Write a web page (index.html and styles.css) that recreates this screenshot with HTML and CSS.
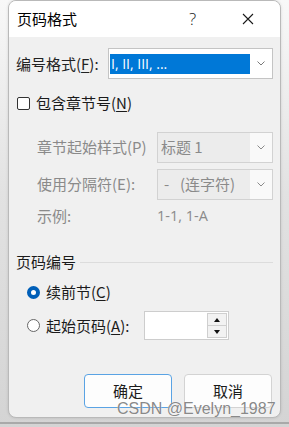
FILE: index.html
```html
<!DOCTYPE html>
<html lang="zh-CN">
<head>
    <meta charset="UTF-8">
    <meta name="viewport" content="width=device-width, initial-scale=1.0">
    <title>页码格式</title>
    <link rel="stylesheet" href="styles.css">
</head>
<body>
    <div class="dialog">
        <!-- 标题栏 -->
        <div class="titlebar">
            <span class="title">页码格式</span>
            <span class="help">?</span>
            <span class="close">
                <svg width="12" height="12" viewBox="0 0 12 12">
                    <path d="M1 1L11 11M11 1L1 11" stroke="#1a1a1a" stroke-width="1.1" fill="none"/>
                </svg>
            </span>
        </div>

        <div class="content">
            <div class="row row-format">
                <span class="label">编号格式(<u>F</u>):</span>
                <div class="select">
                    <span class="select-text"><span class="hl">I, II, III, ...</span></span>
                    <span class="arrow">
                        <svg width="8" height="5" viewBox="0 0 8 5"><path d="M0.5 0.5L4 4L7.5 0.5" stroke="#7a7a7a" fill="none"/></svg>
                    </span>
                </div>
            </div>

            <div class="row row-check">
                <span class="checkbox"></span>
                <span class="check-label">包含章节号(<u>N</u>)</span>
            </div>

            <!-- 章节号设置，禁用状态 -->
            <div class="chapter">
                <div class="row row-sub">
                    <span class="sub-label">章节起始样式(P)</span>
                    <div class="select disabled">
                        <span class="select-text">标题 1</span>
                        <span class="arrow">
                            <svg width="8" height="5" viewBox="0 0 8 5"><path d="M0.5 0.5L4 4L7.5 0.5" stroke="#8a8a8a" fill="none"/></svg>
                        </span>
                    </div>
                </div>
                <div class="row row-sub row-sep">
                    <span class="sub-label">使用分隔符(E):</span>
                    <div class="select disabled">
                        <span class="select-text"><span class="dash">-</span>(连字符)</span>
                        <span class="arrow">
                            <svg width="8" height="5" viewBox="0 0 8 5"><path d="M0.5 0.5L4 4L7.5 0.5" stroke="#8a8a8a" fill="none"/></svg>
                        </span>
                    </div>
                </div>
                <div class="row row-example">
                    <span class="sub-label">示例:</span>
                    <span class="example">1-1, 1-A</span>
                </div>
            </div>

            <div class="group-head">
                <span>页码编号</span>
                <span class="group-line"></span>
            </div>

            <div class="row row-radio">
                <span class="radio checked"></span>
                <span class="radio-label">续前节(<u>C</u>)</span>
            </div>
            <div class="row row-radio row-start">
                <span class="radio"></span>
                <span class="radio-label start-label">起始页码(<u>A</u>):</span>
                <div class="spin">
                    <span class="spin-input"></span>
                    <span class="spin-btns">
                        <span class="spin-btn"><i class="tri up"></i></span>
                        <span class="spin-btn"><i class="tri down"></i></span>
                    </span>
                </div>
            </div>

            <div class="buttons">
                <span class="btn btn-ok">确定</span>
                <span class="btn">取消</span>
            </div>
        </div>

        <span class="watermark">CSDN @Evelyn_1987</span>
    </div>
    <div class="taskline"></div>
</body>
</html>
```

FILE: styles.css
```css
*{
    margin: 0;
    padding: 0;
    box-sizing: border-box;
}

body{
    width: 289px;
    height: 427px;
    overflow: hidden;
    background: linear-gradient(to bottom, #f8f8f8 0%, #e2e2e2 45%, #d4d4d4 100%);
    font-family: "Noto Sans CJK SC", "Open Sans", sans-serif;
    font-size: 15px;
    color: #1b1b1b;
}

u{
    text-decoration: underline;
    text-underline-offset: 2px;
}

.dialog{
    position: relative;
    width: 273px;
    height: 418px;
    margin-left: 8px;
    background-color: #f0f0f0;
    border: 1px solid #b9b9b9;
    border-radius: 8px;
    box-shadow: 0 0 3px rgba(0,0,0,0.12);
    overflow: hidden;
}

/* 标题栏 */
.titlebar{
    height: 36px;
    background-color: #fff;
    display: flex;
    align-items: center;
    line-height: 18px;
}

.title{
    margin-left: 8px;
    color: #000;
}

.help{
    margin-left: 112px;
    font-family: "Open Sans", sans-serif;
    font-size: 17px;
    font-weight: 300;
    color: #222;
}

.close{
    margin-left: 46px;
    display: flex;
}

.content{
    padding: 0 7px;
    line-height: 18px;
}

.row{
    display: flex;
    align-items: center;
}

.row-format{
    margin-top: 11px;
    height: 31px;
}

.label{
    width: 92px;
    color: #222;
}

.select{
    flex: 1;
    height: 31px;
    display: flex;
    background-color: #fff;
    border: 1px solid #c4c4c4;
}

.select-text{
    flex: 1;
    display: flex;
    align-items: center;
    padding: 0 0 0 1px;
}

.hl{
    display: block;
    width: 100%;
    height: 20px;
    line-height: 20px;
    background-color: #0078d7;
    color: #fff;
    font-family: "Open Sans", sans-serif;
    font-size: 14px;
    padding-left: 1px;
}

.arrow{
    width: 22px;
    display: flex;
    align-items: center;
    justify-content: center;
    background-color: #fff;
}

.row-check{
    margin-top: 15px;
    height: 18px;
}

.checkbox{
    width: 13px;
    height: 13px;
    margin-left: 1px;
    border: 1px solid #333;
    border-radius: 2px;
    background-color: #fff;
}

.check-label{
    margin-left: 6px;
}

.chapter{
    padding-left: 21px;
    color: #8a8a8a;
}

.row-sub{
    margin-top: 19px;
    height: 32px;
}

.row-sep{
    margin-top: 5px;
}

.sub-label{
    width: 120px;
}

.select.disabled{
    background-color: #ececec;
    border-color: #d2d2d2;
}

.select.disabled .select-text{
    padding-left: 3px;
}

.select.disabled .arrow{
    background-color: #f9f9f9;
}

.dash{
    width: 19px;
    padding-left: 3px;
}

.row-example{
    margin-top: 7px;
    height: 18px;
}

.example{
    font-family: "Open Sans", sans-serif;
    font-size: 14.5px;
}

.group-head{
    margin-top: 28px;
    height: 18px;
    display: flex;
    align-items: center;
}

.group-line{
    flex: 1;
    height: 1px;
    margin-left: 4px;
    background-color: #dcdcdc;
}

.row-radio{
    margin-top: 12px;
    height: 18px;
    padding-left: 11px;
}

.radio{
    width: 13px;
    height: 13px;
    border: 1px solid #666;
    border-radius: 50%;
    background-color: #fff;
}

.radio.checked{
    border: 4px solid #005fb8;
    background-color: #fff;
}

.radio-label{
    margin-left: 6px;
}

.row-start{
    margin-top: 10px;
    height: 29px;
}

.start-label{
    width: 98px;
}

.spin{
    width: 85px;
    height: 29px;
    display: flex;
    background-color: #fff;
    border: 1px solid #cdcdcd;
}

.spin-input{
    flex: 1;
}

.spin-btns{
    width: 21px;
    display: flex;
    flex-direction: column;
    padding: 1px 1px 1px 0;
}

.spin-btn{
    flex: 1;
    display: flex;
    align-items: center;
    justify-content: center;
    background-color: #f2f2f2;
    border: 1px solid #cfcfcf;
}

.spin-btn + .spin-btn{
    border-top: none;
}

.tri{
    width: 0;
    height: 0;
    border-left: 3.5px solid transparent;
    border-right: 3.5px solid transparent;
}

.tri.up{
    border-bottom: 4px solid #111;
}

.tri.down{
    border-top: 4px solid #111;
}

.buttons{
    margin-top: 34px;
    display: flex;
    justify-content: flex-end;
    gap: 12px;
    padding-right: 1px;
}

.btn{
    width: 88px;
    height: 34px;
    display: flex;
    align-items: center;
    justify-content: center;
    background-color: #fdfdfd;
    border: 1px solid #d3d3d3;
    border-radius: 4px;
    color: #1b1b1b;
}

.btn-ok{
    border: 1px solid #5aa3e4;
}

.watermark{
    position: absolute;
    left: 108px;
    top: 399px;
    font-family: "Liberation Sans", Arial, sans-serif;
    font-size: 16px;
    line-height: 18px;
    color: rgba(105,105,105,0.8);
    text-shadow: 0 0 1px #fff;
    white-space: nowrap;
}

.taskline{
    margin-top: 4px;
    height: 2px;
    background-color: #a9a9a9;
}
```
